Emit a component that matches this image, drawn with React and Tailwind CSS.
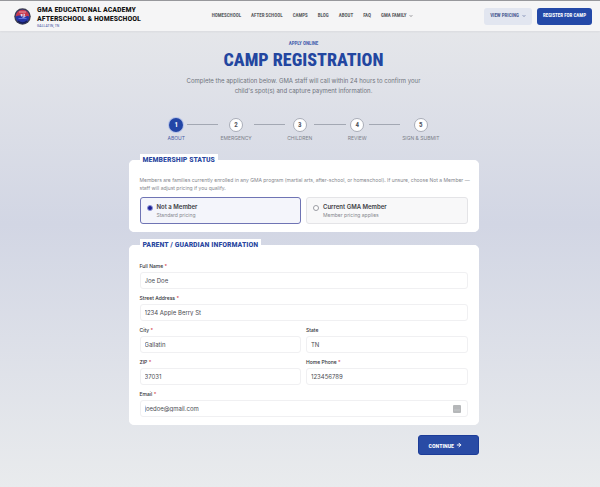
import { ArrowRight, ChevronDown } from 'lucide-react'

const navLinks = ['Homeschool', 'After School', 'Camps', 'Blog', 'About', 'FAQ']
const steps = ['About', 'Emergency', 'Children', 'Review', 'Sign & Submit']

function Logo() {
    return (
        <svg viewBox="0 0 34 34" className="size-[17px] shrink-0" aria-hidden="true">
            <circle cx="17" cy="17" r="16.5" fill="#3d3f4d" />
            <circle cx="17" cy="17" r="14" fill="#2636a6" />
            <path d="M3.500 17a13.500 13.500 0 0 1 27 0c-4-3-7 1-11 0s-9-4-16 0z" fill="#c93a4c" />
            <path d="M10 8h14" stroke="#e79aa6" strokeWidth="2" />
            <path d="M13 12h4v5h-3zM19 11l3 1-1 5h4l-5 2-4 1 3-3z" fill="#d5daf5" />
            <path d="M9 21h16" stroke="#5f70dd" strokeWidth="2" />
            <path d="M8 26c5 5 13 5 18 0" stroke="#171c58" strokeWidth="3" fill="none" />
        </svg>
    )
}

function Header() {
    return (
        <header className="flex h-[31px] items-center justify-between border-t border-[#97989c] bg-[#f5f5f6] pr-2 pl-[14px] shadow-xs">
            <a href="#home" className="flex items-center gap-[6px]">
                <Logo />
                <span className="flex flex-col pt-[2px] font-['Roboto_Condensed','Roboto',sans-serif] uppercase">
                    <span className="text-[8px] leading-[9px] font-bold text-[#111]">GMA Educational Academy</span>
                    <span className="text-[8px] leading-[9px] font-bold text-[#111]">Afterschool &amp; Homeschool</span>
                    <span className="text-[4px] leading-[6px] text-[#4b57a5]">Gallatin, TN</span>
                </span>
            </a>
            <nav className="flex items-center gap-[10px] font-['Roboto_Condensed','Roboto',sans-serif] text-[5px] font-bold text-[#5c5e63] uppercase">
                {navLinks.map((link) => (
                    <a key={link} href="#nav">{link}</a>
                ))}
                <button type="button" className="flex items-center gap-[3px] uppercase">
                    GMA Family <ChevronDown size={4} strokeWidth={4} />
                </button>
            </nav>
            <div className="flex items-center gap-[5px] font-['Roboto_Condensed','Roboto',sans-serif] text-[5px] font-bold uppercase">
                <button type="button" className="flex h-[17px] items-center gap-[3px] rounded-[3px] bg-[#e2e6f0] px-[6px] text-[#4d5f94] uppercase">
                    View Pricing <ChevronDown size={4} strokeWidth={4} />
                </button>
                <a href="#register" className="flex h-[17px] items-center rounded-[3px] bg-[#2449a8] px-[6px] text-white">Register for Camp</a>
            </div>
        </header>
    )
}

function Steps() {
    return (
        <ol className="mx-auto mt-[22px] flex max-w-[272px] gap-[2px]">
            {steps.map((step, i) => (
                <li key={step} className={i > 0 ? 'flex flex-auto gap-[2px]' : 'flex'}>
                    {i > 0 && <span className="mt-[6px] h-px flex-auto bg-[#a3a8b3]" />}
                    <span className="flex flex-col items-center gap-[2px]">
                        <span
                            className={
                                i === 0
                                    ? "flex size-[14px] items-center justify-center rounded-full bg-[#2346a6] font-['Roboto_Condensed',sans-serif] text-[7px] font-bold text-white ring-1 ring-[#b5c2e8]"
                                    : "flex size-[14px] items-center justify-center rounded-full border border-[#a9adb8] bg-white font-['Roboto_Condensed',sans-serif] text-[7px] font-bold text-[#55585f]"
                            }
                        >
                            {i + 1}
                        </span>
                        <span className={i === 0 ? 'text-[5px] leading-[8px] whitespace-nowrap text-[#4b62a8] uppercase' : 'text-[5px] leading-[8px] whitespace-nowrap text-[#7b8089] uppercase'}>
                            {step}
                        </span>
                    </span>
                </li>
            ))}
        </ol>
    )
}

function Panel({ title, children }) {
    return (
        <fieldset className="rounded-[5px] border border-white bg-white px-[10px] pb-[7px]">
            <legend className="bg-white px-[3px] font-['Roboto_Condensed','Roboto',sans-serif] text-[8px] leading-[12px] font-bold text-[#2a479f] uppercase">
                {title}
            </legend>
            {children}
        </fieldset>
    )
}

function MemberOption({ title, note, checked }) {
    return (
        <label
            className={
                checked
                    ? 'flex h-[27px] items-start gap-[4px] rounded-[3px] border border-[#6f74b4] bg-[#f4f5fb] px-[6px] pt-[5px]'
                    : 'flex h-[27px] items-start gap-[4px] rounded-[3px] border border-[#e4e4e7] bg-[#f8f8f9] px-[6px] pt-[5px]'
            }
        >
            <input
                type="radio"
                name="membership"
                defaultChecked={checked}
                className="mt-[2px] size-[6px] appearance-none rounded-full border border-[#9b9ca3] bg-white checked:border-[#8f96d8] checked:bg-[#1c1f96]"
            />
            <span className="flex flex-col">
                <span className="text-[6px] leading-[8px] font-semibold text-[#3d3e44]">{title}</span>
                <span className="text-[5px] leading-[8px] text-[#85878e]">{note}</span>
            </span>
        </label>
    )
}

function Field({ id, label, value, type = 'text', required, wide, children }) {
    return (
        <div className={wide ? 'col-span-2' : ''}>
            <label htmlFor={id} className="block text-[5px] leading-[9px] font-medium text-[#303136]">
                {label} {required && <span className="text-[#d43a4a]">*</span>}
            </label>
            <div className="relative mt-px">
                <input
                    id={id}
                    type={type}
                    defaultValue={value}
                    className="block h-[17px] w-full rounded-[3px] border border-[#f0f0f2] bg-white px-1 text-[6px] text-[#4b4c52]"
                />
                {children}
            </div>
        </div>
    )
}

export default function App() {
    return (
        <div className="min-h-screen bg-linear-to-b from-[#e8e9eb] via-[#d2d6e4] via-46% to-[#e9ebed] font-['Inter',sans-serif]">
            <Header />
            <main className="pt-[8px] pb-4 pl-[7px]">
                <div className="mx-auto max-w-[350px]">
                    <div className="text-center">
                        <p className="font-['Roboto_Condensed','Roboto',sans-serif] text-[5px] leading-[8px] font-bold text-[#4a64ae] uppercase">Apply Online</p>
                        <h1 className="mt-[2px] font-['Roboto_Condensed','Roboto',sans-serif] text-[18px] leading-[22px] font-extrabold text-[#2346a0] uppercase">Camp Registration</h1>
                        <p className="mx-auto mt-[5px] max-w-[236px] text-[6px] leading-[10px] text-[#70747d]">
                            Complete the application below. GMA staff will call within 24 hours to confirm your child's spot(s) and capture payment information.
                        </p>
                    </div>
                    <Steps />
                    <form className="mt-[12px] flex flex-col gap-[7px]">
                        <Panel title="Membership Status">
                            <p className="-mr-2 mt-[10px] text-[5px] leading-[8px] text-[#85878e]">
                                Members are families currently enrolled in any GMA program (martial arts, after-school, or homeschool). If unsure, choose Not a Member — staff will adjust pricing if you qualify.
                            </p>
                            <div className="mt-[5px] grid grid-cols-2 gap-[5px]">
                                <MemberOption title="Not a Member" note="Standard pricing" checked />
                                <MemberOption title="Current GMA Member" note="Member pricing applies" />
                            </div>
                        </Panel>
                        <Panel title="Parent / Guardian Information">
                            <div className="mt-[11px] grid grid-cols-2 gap-x-[5px] gap-y-[5px]">
                                <Field id="name" label="Full Name" value="Joe Doe" required wide />
                                <Field id="street" label="Street Address" value="1234 Apple Berry St" required wide />
                                <Field id="city" label="City" value="Gallatin" required />
                                <Field id="state" label="State" value="TN" />
                                <Field id="zip" label="ZIP" value="37031" required />
                                <Field id="phone" label="Home Phone" value="123456789" type="tel" required />
                                <Field id="email" label="Email" value="joedoe@gmail.com" type="email" required wide>
                                    <svg viewBox="0 0 8 8" className="absolute top-[5px] right-[7px] size-2" aria-hidden="true">
                                        <rect width="8" height="8" rx="1" fill="#b5b7b9" />
                                        <path d="M1.500 5h1M3.500 5h1M5.500 5h1" stroke="#d4d6d8" />
                                    </svg>
                                </Field>
                            </div>
                        </Panel>
                        <button
                            type="button"
                            className="mt-[3px] flex h-[20px] w-[61px] items-center gap-[2px] self-end rounded-[3px] border border-[#1c3c98] bg-[#294ba5] pl-[10px] font-['Roboto_Condensed','Roboto',sans-serif] text-[6px] font-bold text-white uppercase"
                        >
                            Continue <ArrowRight size={6} strokeWidth={4} />
                        </button>
                    </form>
                </div>
            </main>
        </div>
    )
}
